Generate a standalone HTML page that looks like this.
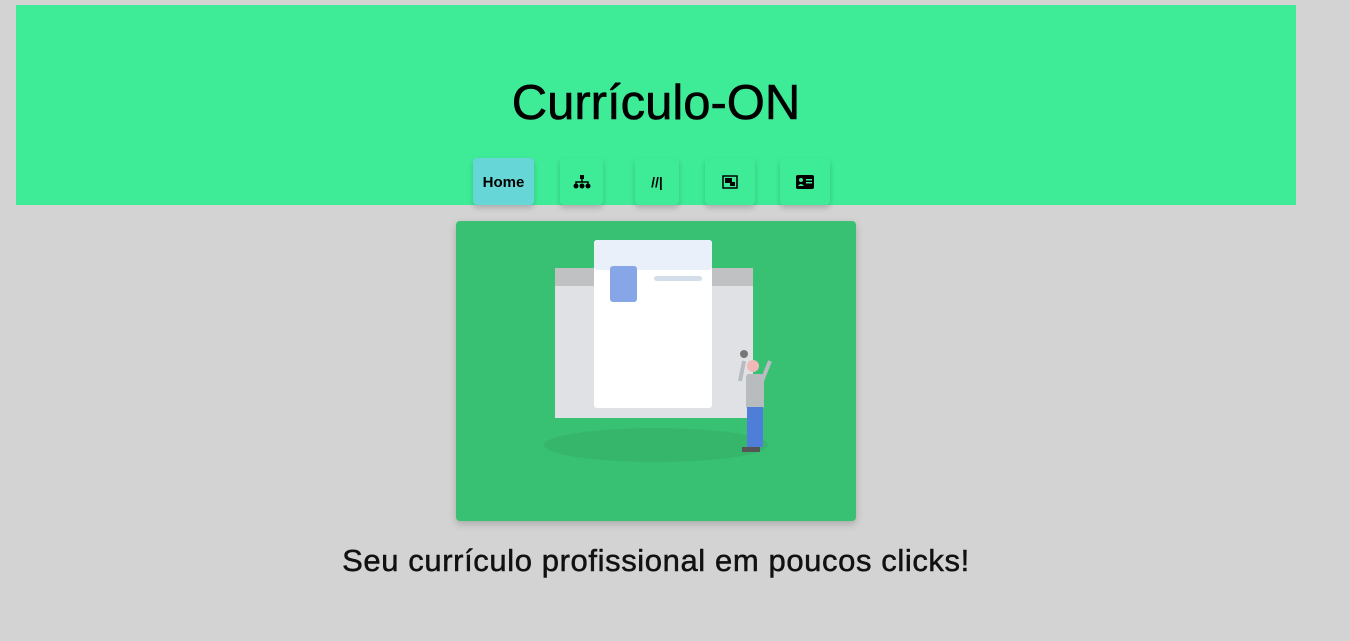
<!DOCTYPE html>
<html><head><style>
body{margin:0;background:#d3d3d3;width:1350px;height:641px;overflow:hidden;font-family:"Liberation Sans","DejaVu Sans",sans-serif;position:relative}
.hdr{position:absolute;left:16px;top:5px;width:1280px;height:200px;background:#3eec98}
h1{position:absolute;left:16px;width:1280px;top:75px;margin:0;text-align:center;font-size:49px;font-weight:normal;color:#000;line-height:56px;-webkit-text-stroke:0.6px #000}
.b{position:absolute;top:158px;height:47px;background:#3eec98;border-radius:4px;box-shadow:0 3px 6px rgba(0,0,0,.18);display:flex;align-items:center;justify-content:center;font-weight:bold;font-size:15px}
.img{position:absolute;left:456px;top:221px;width:400px;height:300px;background:#38c172;border-radius:4px;box-shadow:0 3px 8px rgba(0,0,0,.2)}
p{position:absolute;left:0;width:1312px;top:543px;margin:0;text-align:center;font-size:31px;color:#111;letter-spacing:0.6px;-webkit-text-stroke:0.5px #111}
</style></head><body>
<div class="hdr"></div>
<h1>Currículo-ON</h1>
<div class="b" style="left:473px;width:61px;background:#66d6d6;padding-top:2px;box-sizing:border-box">Home</div>
<div class="b" style="left:560px;width:43px"><svg width="18" height="16" viewBox="0 0 18 16"><rect x="7" y="1" width="4" height="4"/><path d="M9 5v3M3 10V8h12v2" stroke="#000" stroke-width="1.5" fill="none"/><circle cx="3" cy="12" r="2.5"/><circle cx="9" cy="12" r="2.5"/><circle cx="15" cy="12" r="2.5"/></svg></div>
<div class="b" style="left:635px;width:44px;font-size:14px">//|</div>
<div class="b" style="left:705px;width:50px"><svg width="16" height="14" viewBox="0 0 16 14"><rect x="1" y="1" width="14" height="12" fill="none" stroke="#000" stroke-width="1.5"/><rect x="3" y="3" width="7" height="5"/><rect x="8" y="7" width="5" height="4"/></svg></div>
<div class="b" style="left:780px;width:50px"><svg width="18" height="14" viewBox="0 0 18 14"><rect x="0" y="0" width="18" height="14" rx="2"/><circle cx="5" cy="5" r="2" fill="#3eec98"/><path d="M2 11q3-4 6 0z" fill="#3eec98"/><rect x="10" y="4" width="6" height="1.5" fill="#3eec98"/><rect x="10" y="7" width="6" height="1.5" fill="#3eec98"/></svg></div>
<div class="img"><svg width="400" height="300">
<ellipse cx="200" cy="224" rx="112" ry="17" fill="#36b66a"/>
<rect x="99" y="47" width="198" height="150" fill="#e0e1e4"/>
<rect x="99" y="47" width="198" height="18" fill="#c0c1c2"/>
<rect x="138" y="19" width="118" height="168" rx="3" fill="#fff"/>
<rect x="138" y="19" width="118" height="30" rx="3" fill="#e9f0fa"/>
<rect x="154" y="45" width="27" height="36" rx="3" fill="#86a6e8"/>
<rect x="198" y="55" width="48" height="5" rx="2.5" fill="#d3deea"/>
<circle cx="288" cy="133" r="4" fill="#777"/>
<path d="M284 160l4-20M306 160l8-20" stroke="#b8bcbf" stroke-width="4"/>
<rect x="290" y="153" width="18" height="35" rx="3" fill="#b8bcbf"/>
<circle cx="297" cy="145" r="6" fill="#f2b8b8"/>
<rect x="291" y="186" width="16" height="40" fill="#4f7ed8"/>
<rect x="286" y="226" width="18" height="5" fill="#555"/>
</svg></div>
<p>Seu currículo profissional em poucos clicks!</p>
</body></html>
